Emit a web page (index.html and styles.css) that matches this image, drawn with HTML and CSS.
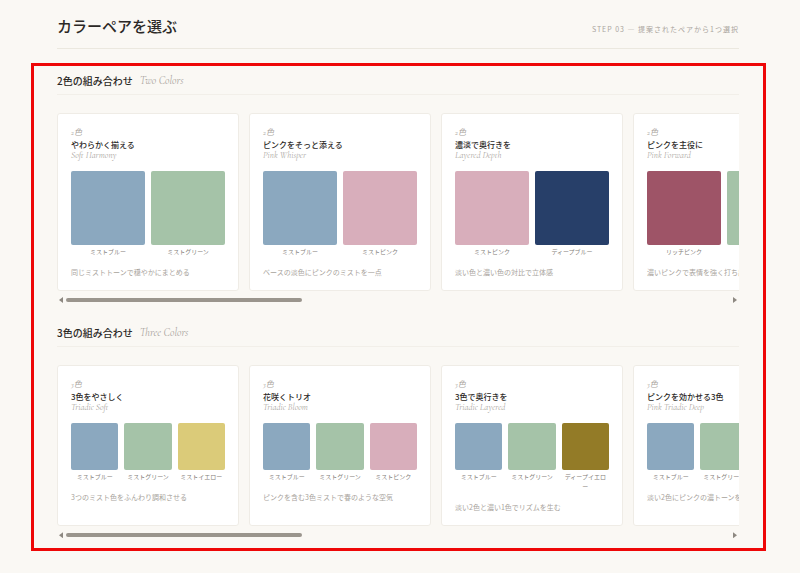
FILE: index.html
```
<!DOCTYPE html>
<html lang="ja">
<head>
    <meta charset="UTF-8">
    <meta name="viewport" content="width=device-width, initial-scale=1.0">
    <title>カラーペアを選ぶ</title>
    <link rel="stylesheet" href="styles.css">
</head>
<body>
    <header class="page-header">
        <h1>カラーペアを選ぶ</h1>
        <p class="step">STEP 03 — 提案されたペアから1つ選択</p>
    </header>

    <main class="frame">
        <section class="group">
            <h2>2色の組み合わせ <em>Two Colors</em></h2>
            <div class="cards" id="cards-two">
                <article class="card">
                    <p class="tag">2色</p>
                    <h3>やわらかく揃える</h3>
                    <p class="sub">Soft Harmony</p>
                    <ul class="swatches">
                        <li><span class="chip mist-blue"></span><span class="name">ミストブルー</span></li>
                        <li><span class="chip mist-green"></span><span class="name">ミストグリーン</span></li>
                    </ul>
                    <p class="desc">同じミストトーンで穏やかにまとめる</p>
                </article>
                <article class="card">
                    <p class="tag">2色</p>
                    <h3>ピンクをそっと添える</h3>
                    <p class="sub">Pink Whisper</p>
                    <ul class="swatches">
                        <li><span class="chip mist-blue"></span><span class="name">ミストブルー</span></li>
                        <li><span class="chip mist-pink"></span><span class="name">ミストピンク</span></li>
                    </ul>
                    <p class="desc">ベースの淡色にピンクのミストを一点</p>
                </article>
                <article class="card">
                    <p class="tag">2色</p>
                    <h3>濃淡で奥行きを</h3>
                    <p class="sub">Layered Depth</p>
                    <ul class="swatches">
                        <li><span class="chip mist-pink"></span><span class="name">ミストピンク</span></li>
                        <li><span class="chip deep-blue"></span><span class="name">ディープブルー</span></li>
                    </ul>
                    <p class="desc">淡い色と濃い色の対比で立体感</p>
                </article>
                <article class="card">
                    <p class="tag">2色</p>
                    <h3>ピンクを主役に</h3>
                    <p class="sub">Pink Forward</p>
                    <ul class="swatches">
                        <li><span class="chip rich-pink"></span><span class="name">リッチピンク</span></li>
                        <li><span class="chip mist-green"></span><span class="name">ミストグリーン</span></li>
                    </ul>
                    <p class="desc">濃いピンクで表情を強く打ち出す</p>
                </article>
            </div>
            <div class="scrollbar">
                <button type="button" class="arrow prev" data-target="cards-two" aria-label="前へ"></button>
                <div class="track"><div class="thumb"></div></div>
                <button type="button" class="arrow next" data-target="cards-two" aria-label="次へ"></button>
            </div>
        </section>

        <section class="group">
            <h2>3色の組み合わせ <em>Three Colors</em></h2>
            <div class="cards" id="cards-three">
                <article class="card">
                    <p class="tag">3色</p>
                    <h3>3色をやさしく</h3>
                    <p class="sub">Triadic Soft</p>
                    <ul class="swatches">
                        <li><span class="chip mist-blue"></span><span class="name">ミストブルー</span></li>
                        <li><span class="chip mist-green"></span><span class="name">ミストグリーン</span></li>
                        <li><span class="chip mist-yellow"></span><span class="name">ミストイエロー</span></li>
                    </ul>
                    <p class="desc">3つのミスト色をふんわり調和させる</p>
                </article>
                <article class="card">
                    <p class="tag">3色</p>
                    <h3>花咲くトリオ</h3>
                    <p class="sub">Triadic Bloom</p>
                    <ul class="swatches">
                        <li><span class="chip mist-blue"></span><span class="name">ミストブルー</span></li>
                        <li><span class="chip mist-green"></span><span class="name">ミストグリーン</span></li>
                        <li><span class="chip mist-pink"></span><span class="name">ミストピンク</span></li>
                    </ul>
                    <p class="desc">ピンクを含む3色ミストで春のような空気</p>
                </article>
                <article class="card">
                    <p class="tag">3色</p>
                    <h3>3色で奥行きを</h3>
                    <p class="sub">Triadic Layered</p>
                    <ul class="swatches">
                        <li><span class="chip mist-blue"></span><span class="name">ミストブルー</span></li>
                        <li><span class="chip mist-green"></span><span class="name">ミストグリーン</span></li>
                        <li><span class="chip deep-yellow"></span><span class="name">ディープイエロー</span></li>
                    </ul>
                    <p class="desc">淡い2色と濃い1色でリズムを生む</p>
                </article>
                <article class="card">
                    <p class="tag">3色</p>
                    <h3>ピンクを効かせる3色</h3>
                    <p class="sub">Pink Triadic Deep</p>
                    <ul class="swatches">
                        <li><span class="chip mist-blue"></span><span class="name">ミストブルー</span></li>
                        <li><span class="chip mist-green"></span><span class="name">ミストグリーン</span></li>
                        <li><span class="chip rich-pink"></span><span class="name">リッチピンク</span></li>
                    </ul>
                    <p class="desc">淡い2色にピンクの濃トーンを重ねる</p>
                </article>
            </div>
            <div class="scrollbar">
                <button type="button" class="arrow prev" data-target="cards-three" aria-label="前へ"></button>
                <div class="track"><div class="thumb"></div></div>
                <button type="button" class="arrow next" data-target="cards-three" aria-label="次へ"></button>
            </div>
        </section>
    </main>

    <script>
        document.querySelectorAll(".arrow").forEach(button => {
            button.addEventListener("click", () => {
                const row = document.getElementById(button.dataset.target);
                const step = button.classList.contains("next") ? 192 : -192;
                row.scrollBy({ left: step, behavior: "smooth" });
            });
        });
    </script>
</body>
</html>
```

FILE: styles.css
```
* {
    margin: 0;
    padding: 0;
    box-sizing: border-box;
}

body {
    font-family: "Noto Sans CJK JP", sans-serif;
    background-color: #faf8f4;
    color: #2b2826;
}

.page-header {
    display: flex;
    justify-content: space-between;
    align-items: center;
    margin: 0 61px 14px 57px;
    padding: 14px 0 10px;
    border-bottom: 1px solid #ebe8df;
}

h1 {
    font-size: 15px;
    line-height: 24px;
    font-weight: 500;
}

.step {
    font-size: 7px;
    line-height: 10px;
    letter-spacing: 1px;
    padding-top: 5px;
    color: #aaa59e;
}

.frame {
    margin: 0 34px 0 31px;
    padding: 7px 24px 9px 23px;
    border: 3px solid #ee0707;
}

.group + .group {
    margin-top: 21px;
}

h2 {
    display: flex;
    align-items: center;
    gap: 7px;
    margin-bottom: 18px;
    padding-bottom: 5px;
    border-bottom: 1px solid #f2efe9;
    font-size: 10px;
    line-height: 16px;
    font-weight: 500;
}

h2 em,
.sub {
    font-family: "Cormorant Garamond", "Liberation Serif", serif;
    font-style: italic;
    font-weight: 400;
    color: #a8a39c;
}

h2 em {
    font-size: 11px;
}

.cards {
    display: flex;
    align-items: stretch;
    gap: 10px;
    overflow-x: auto;
    scrollbar-width: none;
}

.card {
    flex: 0 0 182px;
    padding: 14px 13px 12px;
    background-color: #fff;
    border: 1px solid #efece6;
    border-radius: 3px;
}

.tag {
    font-family: "Cormorant Garamond", "Liberation Serif", "Noto Sans CJK JP", serif;
    font-style: italic;
    font-size: 8px;
    line-height: 10px;
    color: #a8a39c;
}

h3 {
    margin-top: 1px;
    font-size: 8px;
    line-height: 12px;
    font-weight: 500;
    white-space: nowrap;
}

.sub {
    font-size: 9px;
    line-height: 10px;
}

.swatches {
    display: flex;
    gap: 6px;
    margin-top: 10px;
    list-style: none;
}

.swatches li {
    flex: 1 1 0;
    min-width: 0;
}

.chip {
    display: block;
    aspect-ratio: 1;
    margin-bottom: 2px;
    border-radius: 2px;
}

.name {
    display: block;
    padding: 0 2px;
    font-size: 6px;
    line-height: 10px;
    line-break: loose;
    text-align: center;
    color: #85807a;
}

.mist-blue { background-color: #8ba8bf; }
.mist-green { background-color: #a5c3a8; }
.mist-pink { background-color: #d8aebb; }
.mist-yellow { background-color: #dbcb79; }
.deep-blue { background-color: #273f69; }
.deep-yellow { background-color: #937b27; }
.rich-pink { background-color: #9e5467; }

.desc {
    margin-top: 9px;
    font-size: 7px;
    line-height: 12px;
    white-space: nowrap;
    color: #a8a39c;
}

.scrollbar {
    display: flex;
    align-items: center;
    gap: 3px;
    height: 8px;
    margin-top: 5px;
    padding: 0 2px;
}

.arrow {
    width: 4px;
    height: 6px;
    border: none;
    background-color: #8d8881;
    cursor: pointer;
}

.prev {
    clip-path: polygon(100% 0, 100% 100%, 0 50%);
}

.next {
    clip-path: polygon(0 0, 100% 50%, 0 100%);
}

.track {
    flex: 1;
}

.thumb {
    width: 236px;
    height: 4px;
    border-radius: 2px;
    background-color: #9a958d;
}
```
